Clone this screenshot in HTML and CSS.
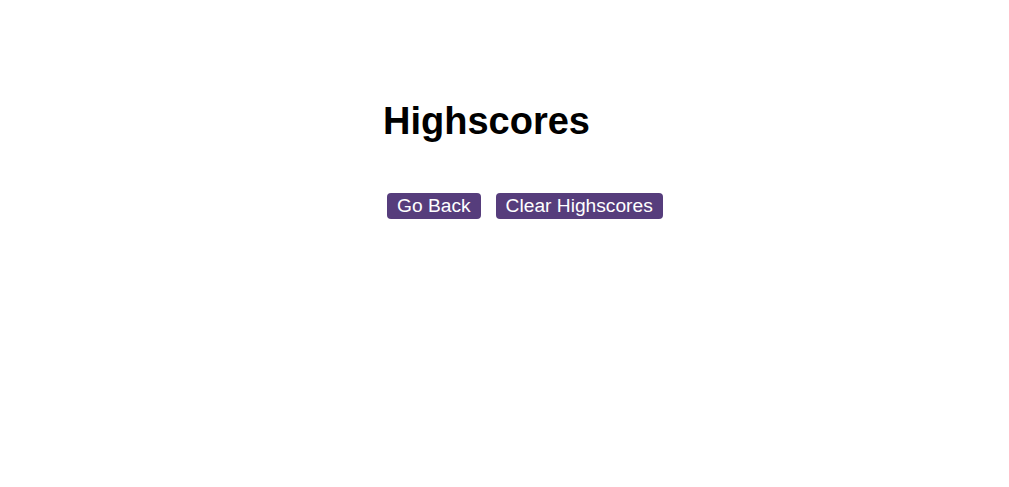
FILE: index.html
```html
<!DOCTYPE html>
<html>
<head>
<meta charset="utf-8">
<link rel="stylesheet" href="styles.css">
</head>
<body>
<main class="scores">
  <h1 class="title">Highscores</h1>
  <ol class="list"></ol>
  <div class="actions">
    <button class="btn">Go Back</button>
    <button class="btn">Clear Highscores</button>
  </div>
</main>
</body>
</html>
```
FILE: styles.css
```css
html, body {
  margin: 0;
  background: #fff;
}
body {
  font-family: "Liberation Sans", Arial, sans-serif;
}
.scores {
  padding-left: 383px;
  padding-top: 97px;
}
.title {
  margin: 0;
  font-size: 38px;
  font-weight: bold;
  color: #000;
  line-height: 48px;
}
.list {
  margin: 0;
  padding: 0;
  height: 48px;
}
.actions {
  display: flex;
  gap: 15px;
  padding-left: 4px;
}
.btn {
  font-family: inherit;
  font-size: 19.2px;
  line-height: 22px;
  color: #fff;
  background: #563d7c;
  border: none;
  border-radius: 4px;
  padding: 2px 10px 2px;
  cursor: pointer;
}
```
